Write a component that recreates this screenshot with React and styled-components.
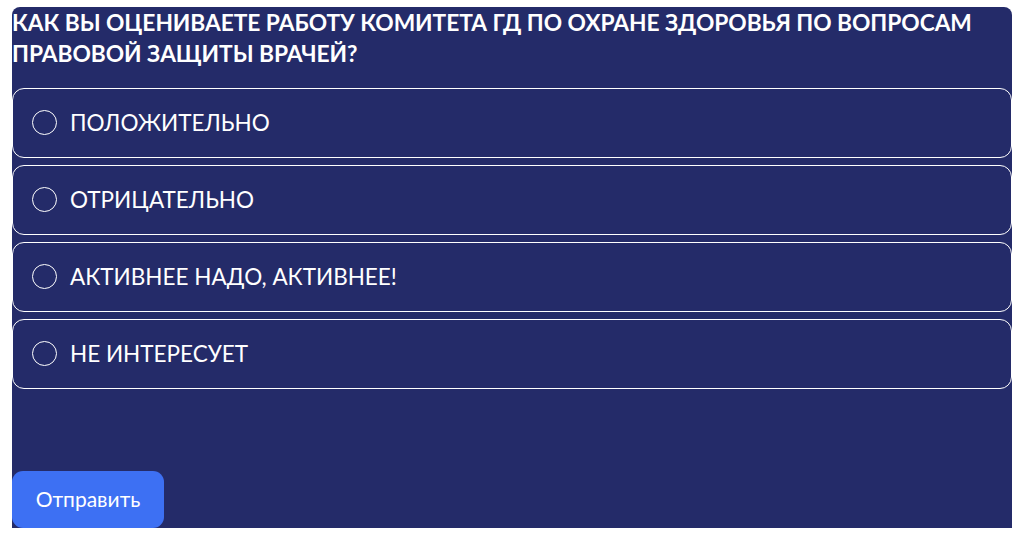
import React, { useState } from "react";
import styled, { createGlobalStyle } from "styled-components";

const Global = createGlobalStyle`
  html, body { margin: 0; padding: 0; background: #ffffff; }
  body { font-family: Lato, "Noto Sans", sans-serif; }
  * { box-sizing: border-box; }
`;

const Page = styled.div`
  padding: 7px 10px 10px 12px;
`;

const Panel = styled.form`
  width: 1000px;
  height: 521px;
  background: #242b69;
  border-radius: 8px 8px 0 0;
  display: flex;
  flex-direction: column;
`;

const Title = styled.h2`
  margin: 0;
  padding-top: 0;
  color: #ffffff;
  font-family: Lato, sans-serif;
  font-weight: 700;
  font-size: 22.75px;
  line-height: 31px;
  text-transform: uppercase;
  letter-spacing: -0.05px;
`;

const Options = styled.div`
  display: flex;
  flex-direction: column;
  gap: 7px;
  margin-top: 19px;
`;

const Option = styled.label`
  height: 70px;
  border: 1px solid #ffffff;
  border-radius: 12px;
  display: flex;
  align-items: center;
  padding: 0 0 2px 19px;
  gap: 13px;
  cursor: pointer;
  color: #ffffff;
  font-family: Lato, sans-serif;
  font-size: 22.5px;
`;

const Radio = styled.span`
  width: 25px;
  height: 25px;
  border-radius: 50%;
  border: 1.2px solid #ffffff;
  flex: none;
  display: flex;
  align-items: center;
  justify-content: center;
  &::after {
    content: "";
    width: 13px;
    height: 13px;
    border-radius: 50%;
    background: #ffffff;
    display: ${(p) => (p.$checked ? "block" : "none")};
  }
`;

const Footer = styled.div`
  margin-top: auto;
`;

const Submit = styled.button`
  width: 152px;
  height: 57px;
  border: none;
  border-radius: 11px;
  background: #3d70f3;
  color: #ffffff;
  font-family: Lato, sans-serif;
  font-size: 21px;
  padding: 0 0 2px;
  cursor: pointer;
  display: block;
`;

const answers = [
  "ПОЛОЖИТЕЛЬНО",
  "ОТРИЦАТЕЛЬНО",
  "АКТИВНЕЕ НАДО, АКТИВНЕЕ!",
  "НЕ ИНТЕРЕСУЕТ",
];

export default function App() {
  const [sel, setSel] = useState(null);
  return (
    <Page>
      <Global />
      <Panel onSubmit={(e) => e.preventDefault()}>
        <Title>
          Как вы оцениваете работу комитета ГД по охране здоровья по вопросам
          правовой защиты врачей?
        </Title>
        <Options>
          {answers.map((a, i) => (
            <Option key={a} onClick={() => setSel(i)}>
              <Radio $checked={sel === i} />
              {a}
            </Option>
          ))}
        </Options>
        <Footer>
          <Submit type="submit">Отправить</Submit>
        </Footer>
      </Panel>
    </Page>
  );
}
